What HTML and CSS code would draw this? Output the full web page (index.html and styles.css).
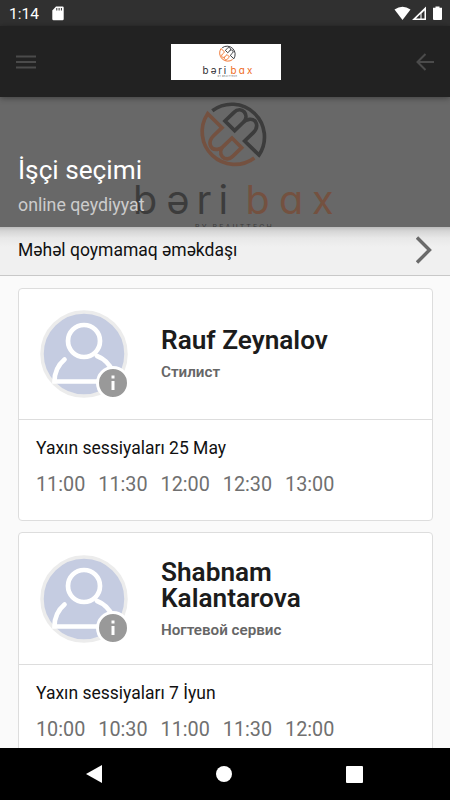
FILE: index.html
```
<!DOCTYPE html>
<html lang="az">
<head>
<meta charset="utf-8">
<title>İşçi seçimi</title>
<link rel="stylesheet" href="styles.css">
</head>
<body>
<svg class="defs" width="0" height="0">
  <symbol id="logo" overflow="visible">
    <g transform="translate(190 90) scale(.3333)" fill="none" stroke-width="11">
      <path class="ink" d="M67 62A98 98 0 0 1 207 195L164 153L190 128C208 110 200 86 178 88C170 89 164 92 160 97L134 122L105 93L132 67C142 57 155 57 163 66C171 76 168 89 160 97"/>
      <path class="accent" transform="rotate(180 130 133)" d="M67 62A98 98 0 0 1 207 195L164 153L190 128C208 110 200 86 178 88C170 89 164 92 160 97L134 122L105 93L132 67C142 57 155 57 163 66C171 76 168 89 160 97"/>
    </g>
    <text class="word ink-fill" y="214.3" x="133 166.500 196.500 218.500">bəri</text>
    <text class="word accent-fill" y="214.3" x="245.500 279 312">bax</text>
    <text class="tag ink-fill" x="195" y="229.500">BY BEAUTTECH</text>
  </symbol>
  <symbol id="person" viewBox="0 0 88 88">
    <circle cx="44" cy="44" r="42" fill="#c5cce1" stroke="#ececec" stroke-width="3.500"/>
    <g fill="none" stroke="#fff" stroke-width="4.700" stroke-linecap="round">
      <circle cx="44" cy="31" r="16"/>
      <path d="M24.500 49.500C18 55 14.500 63 14.500 71.500H62M57 46C65 49 70 55 73 62"/>
    </g>
  </symbol>
</svg>
<div class="screen">
  <div class="status">
    <span class="clock">1:14</span>
    <svg class="sd" width="12" height="15" viewBox="0 0 12 15"><path fill="#fff" d="M4 .5H10.500Q11.700.5 11.700 1.700V13Q11.700 14.200 10.500 14.200H1.500Q.3 14.200.3 13V4.500Z"/><path stroke="#303030" stroke-width="1" d="M4.800 2V4.500M7.100 2V4.500M9.400 2V4.500"/></svg>
    <svg class="signals" width="50" height="16" viewBox="0 0 50 16"><path fill="#fff" d="M.5 3.500Q8.500-2 16.500 3.500L8.500 14Z"/><path fill="#fff" fill-rule="evenodd" d="M32 .5V14H18ZM30.500 4.500L27.500 7.500V12.500H30.500Z"/><path fill="#303030" d="M22 12.500L26.500 8V12.500Z"/><path fill="#fff" d="M41.500.5H45.500V1.800H48V13Q48 14 47 14H40Q39 14 39 13V1.800H41.500Z"/></svg>
  </div>
  <header class="bar">
    <svg width="20" height="16" viewBox="0 0 20 16"><path stroke="#4b4b4b" stroke-width="2" d="M0 2.500H20M0 8H20M0 13.500H20"/></svg>
    <svg class="brand" width="110" height="36" viewBox="6.700 95.500 442 144.700"><use href="#logo"/></svg>
    <svg width="18" height="18" viewBox="0 0 18 18"><path fill="none" stroke="#4b4b4b" stroke-width="2" d="M18 9H2M9.500 1L1.500 9L9.500 17"/></svg>
  </header>
  <section class="hero">
    <svg class="cover" width="450" height="130" viewBox="0 97 450 130"><use href="#logo"/></svg>
    <h1>İşçi seçimi</h1>
    <p>online qeydiyyat</p>
  </section>
  <div class="skip">
    <span>Məhəl qoymamaq əməkdaşı</span>
    <svg width="18" height="28" viewBox="0 0 18 28"><path fill="none" stroke="#6a6a6a" stroke-width="3.400" d="M1 1.500L13.500 14L1 26.500"/></svg>
  </div>
  <main class="list">
    <article class="card">
      <div class="person">
        <div class="avatar"><svg width="88" height="88"><use href="#person"/></svg><span class="info"><svg width="4" height="16" viewBox="0 0 4 16"><path fill="#fff" d="M.5.500H3.500V3.500H.5ZM.5 6H3.500V15H.5Z"/></svg></span></div>
        <div class="who"><h2>Rauf Zeynalov</h2><p>Стилист</p></div>
      </div>
      <div class="sessions">
        <h3>Yaxın sessiyaları 25 May</h3>
        <div class="times"><span>11:00</span><span>11:30</span><span>12:00</span><span>12:30</span><span>13:00</span></div>
      </div>
    </article>
    <article class="card">
      <div class="person">
        <div class="avatar"><svg width="88" height="88"><use href="#person"/></svg><span class="info"><svg width="4" height="16" viewBox="0 0 4 16"><path fill="#fff" d="M.5.500H3.500V3.500H.5ZM.5 6H3.500V15H.5Z"/></svg></span></div>
        <div class="who"><h2>Shabnam Kalantarova</h2><p>Ногтевой сервис</p></div>
      </div>
      <div class="sessions">
        <h3>Yaxın sessiyaları 7 İyun</h3>
        <div class="times"><span>10:00</span><span>10:30</span><span>11:00</span><span>11:30</span><span>12:00</span></div>
      </div>
    </article>
  </main>
  <nav class="nav">
    <svg width="16" height="18" viewBox="0 0 16 18"><path fill="#fff" d="M0 9L16 0V18Z"/></svg>
    <svg width="16" height="16" viewBox="0 0 16 16"><circle fill="#fff" cx="8" cy="8" r="8"/></svg>
    <svg width="17" height="17" viewBox="0 0 17 17"><rect fill="#fff" width="17" height="17" rx="1"/></svg>
  </nav>
</div>
</body>
</html>
```
FILE: styles.css
```
* { box-sizing: border-box; }
body { margin: 0; font-family: Roboto, "Liberation Sans", sans-serif; }
h1, h2, h3, p { margin: 0; }
svg { display: block; flex: none; }
.defs { position: absolute; }
.screen { width: 450px; height: 800px; overflow: hidden; display: flex; flex-direction: column; background: #fafafa; }
.status { height: 26px; flex: none; background: #303030; color: #fff; display: flex; align-items: center; padding: 0 7px 0 9px; }
.clock { font-size: 15.5px; line-height: 26px; padding-top: 2px; }
.sd { margin-left: 13px; }
.signals { margin-left: auto; margin-right: -1px; margin-top: 1px; }
.bar { height: 71px; flex: none; background: #222; display: flex; align-items: center; justify-content: space-between; padding: 0 16px; box-shadow: 0 1px 6px rgba(0,0,0,.4); z-index: 1; }
.brand { background: #fff; overflow: hidden; --ink: #2c2c30; --accent: #ee6b22; }
.ink { stroke: var(--ink); }
.accent { stroke: var(--accent); }
.ink-fill { fill: var(--ink); }
.accent-fill { fill: var(--accent); }
.word { font: 400 39.5px Inter, sans-serif; font-feature-settings: "cv11"; }
.tag { font: 400 7px Inter, sans-serif; letter-spacing: 2.1px; }
.hero { position: relative; height: 130px; flex: none; background: #686868; padding: 57px 18px 0; overflow: hidden; }
.cover { position: absolute; inset: 0; --ink: #3c3c3c; --accent: #745140; }
.hero h1 { position: relative; font-size: 26.2px; font-weight: 400; line-height: 32px; color: #fff; }
.hero p { position: relative; font-size: 17.8px; line-height: 22px; margin-top: 8px; color: #ccc; }
.skip { height: 49px; flex: none; display: flex; align-items: center; justify-content: space-between; padding: 0 16px 2px 18px; font-size: 17.5px; color: #111; border-bottom: 1px solid #c8c8c8; background: linear-gradient(#bdbdbd 0, #d5d5d5 4px, #e8e8e8 11px, #f0f0f0 20px); }
.list { flex: 1; min-height: 0; overflow: hidden; padding: 12px 17px 0 18px; }
.card { height: 233px; border: 1px solid #ddd; border-radius: 4px; background: #fff; margin-bottom: 11px; }
.person { height: 131px; display: flex; align-items: center; padding-left: 21px; border-bottom: 1px solid #ddd; }
.card + .card .person { height: 132px; }
.avatar { position: relative; }
.info { position: absolute; right: -2px; bottom: -2px; width: 34px; height: 34px; border-radius: 50%; border: 3px solid #fff; background: #999; display: grid; place-items: center; }
.who { width: 210px; margin-left: 33px; }
.who h2 { font-size: 26.2px; font-weight: 600; line-height: 26px; color: #1c1c1c; }
.who p { font-size: 15.2px; font-weight: 600; line-height: 18px; margin-top: 10px; color: #666; }
.sessions { padding: 17px 17px; }
.sessions h3 { font-size: 17.5px; font-weight: 400; line-height: 22px; color: #111; }
.times { display: flex; gap: 13px; margin-top: 14px; font-size: 19.8px; line-height: 24px; color: #707070; }
.nav { height: 52px; flex: none; background: #000; display: flex; align-items: center; justify-content: space-between; padding: 0 87px 0 86px; }
```
